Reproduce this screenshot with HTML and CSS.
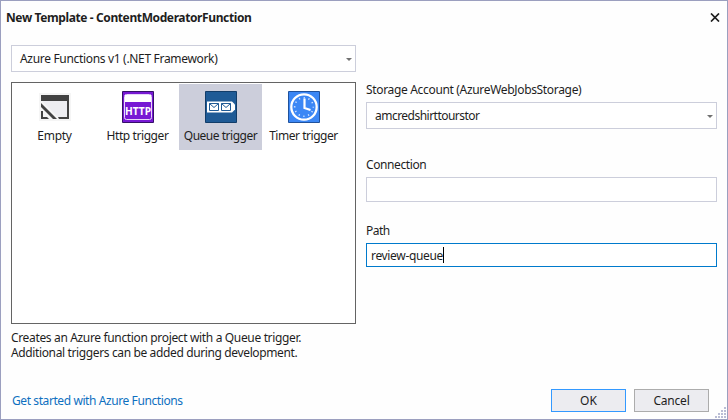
FILE: index.html
```html
<!DOCTYPE html>
<html lang="en">
<head>
<meta charset="utf-8">
<title>New Template - ContentModeratorFunction</title>
<link rel="stylesheet" href="styles.css">
</head>
<body>
<main class="dialog">
  <header class="titlebar">
    <h1 class="title"><span class="t-title">New Template - ContentModeratorFunction</span></h1>
    <svg class="close" width="10" height="9" viewBox="0 0 10 9"><path d="M1 .5 9 8.5M9 .5 1 8.5" fill="none" stroke="#1e1e1e" stroke-width="1.7"/></svg>
  </header>
  <div class="content">
    <section class="left">
      <div class="combo"><span class="t-framework">Azure Functions v1 (.NET Framework)</span><i class="arrow"></i></div>
      <div class="templates">
        <div class="item">
          <svg width="32" height="32" viewBox="0 0 32 32"><path fill="#f5f5f5" d="M0 2h32v28H0z"/><path fill="#ededf1" d="M4 10h24v16H19L4 11z"/><path fill="#424242" d="M2 4h28v24H20l-1-2h9V10H2zM2 20h2v6h4l2 2H2z"/><path fill="#424242" d="M2 12v4l12 12h4z"/></svg>
          <span class="t-empty">Empty</span>
        </div>
        <div class="item">
          <svg width="32" height="32" viewBox="0 0 32 32"><path fill="#7719d4" stroke="#351069" d="M.5.5h31v31H.5z"/><rect x="2.500" y="3.500" width="27" height="25" rx="2" fill="none" stroke="#e7d6f8"/><path fill="#fff" d="M3 4h26v7H3z"/><text class="http" x="3" y="23.500" textLength="26" lengthAdjust="spacingAndGlyphs">HTTP</text></svg>
          <span class="t-http">Http trigger</span>
        </div>
        <div class="item selected">
          <svg width="32" height="32" viewBox="0 0 32 32"><path fill="#1f5b96" stroke="#123d69" d="M.5.5h31v31H.5z"/><path fill="#fff" d="M2 10.500h25l3 3v5l-3 3H2z"/><path fill="#fff" stroke="#1f5b96" d="M4.500 12.500h9v7h-9zM16.500 12.500h9v7h-9zM4.500 12.500l4.500 4 4.500-4M16.500 12.500l4.500 4 4.500-4"/></svg>
          <span class="t-queue">Queue trigger</span>
        </div>
        <div class="item">
          <svg width="32" height="32" viewBox="0 0 32 32"><path fill="#3b87f5" stroke="#20529c" d="M.5.5h31v31H.5z"/><circle cx="16" cy="16" r="12.700" fill="none" stroke="#fff" stroke-width="2.300"/><circle cx="16" cy="16" r="9.300" fill="none" stroke="#cfe1ff" stroke-width="1.600" stroke-dasharray="1.300 3.570" stroke-dashoffset=".65"/><path d="M16.500 7.500V17l6 2" fill="none" stroke="#fff" stroke-width="2.200"/></svg>
          <span class="t-timer">Timer trigger</span>
        </div>
      </div>
      <p class="description"><span class="t-desc1">Creates an Azure function project with a Queue trigger.</span><br><span class="t-desc2">Additional triggers can be added during development.</span></p>
    </section>
    <section class="right">
      <label class="label"><span class="t-storage">Storage Account (AzureWebJobsStorage)</span></label>
      <div class="combo"><span class="t-account">amcredshirttourstor</span><i class="arrow"></i></div>
      <label class="label connection"><span class="t-conn">Connection</span></label>
      <div class="input"></div>
      <label class="label path"><span class="t-path">Path</span></label>
      <div class="input focused"><span class="t-review">review-queue</span><i class="caret"></i></div>
    </section>
  </div>
  <footer class="footer">
    <a class="link"><span class="t-link">Get started with Azure Functions</span></a>
    <div class="button primary"><span class="t-ok">OK</span></div>
    <div class="button"><span class="t-cancel">Cancel</span></div>
  </footer>
  <svg class="grip" width="11" height="11" viewBox="0 0 11 11"><path fill="#babdd5" d="M9 0h2v2H9zM6 3h2v2H6zM9 3h2v2H9zM3 6h2v2H3zM6 6h2v2H6zM9 6h2v2H9zM0 9h2v2H0zM3 9h2v2H3zM6 9h2v2H6zM9 9h2v2H9z"/></svg>
</main>
</body>
</html>
```
FILE: styles.css
```css
* { box-sizing: border-box; }
body { margin: 0; }
.dialog {
  position: relative;
  width: 728px;
  height: 420px;
  display: flex;
  flex-direction: column;
  border: 1px solid #9b9fbf;
  background: #fefefe;
  color: #1e1e1e;
  font: 12px/15px "Noto Sans", "Open Sans", sans-serif;
  white-space: nowrap;
}
.titlebar {
  height: 44px;
  flex: none;
  display: flex;
  justify-content: space-between;
  align-items: flex-start;
  padding: 9px 7px 0 5px;
}
.title { margin: 0; font-size: 12px; line-height: 15px; font-weight: 700; }
.close { margin-top: 3px; }
.content { display: flex; gap: 10px; padding: 0 10px; height: 340px; }
.left { width: 345px; }
.right { width: 351px; padding-top: 37px; }
.combo {
  height: 27px;
  display: flex;
  align-items: center;
  justify-content: space-between;
  border: 1px solid #cccedb;
  padding: 0 3px 0 8px;
  background: #fff;
}
.arrow { border: 3px solid transparent; border-top-color: #717171; border-bottom: 0; margin-top: 2px; }
.templates {
  display: flex;
  align-items: flex-start;
  margin-top: 10px;
  height: 242px;
  border: 1px solid #646464;
  padding: 1px;
  background: #fff;
}
.item {
  width: 83px;
  height: 66px;
  padding-top: 7px;
  display: flex;
  flex-direction: column;
  align-items: center;
  gap: 5px;
}
.item svg { display: block; flex: none; }
.selected { background: #cccedb; }
.http { font: 700 11px "Noto Sans", sans-serif; fill: #fff; }
.description { margin: 6px 0 0; }
.label { display: block; height: 20px; }
.connection { margin-top: 28px; }
.path { margin-top: 21px; }
.input {
  height: 25px;
  display: flex;
  align-items: center;
  border: 1px solid #cccedb;
  padding-left: 4px;
  background: #fff;
}
.focused { height: 24px; border-color: #007acc; }
.caret { width: 1px; height: 16px; background: #000; }
.footer { display: flex; padding: 4px 18px 0 11px; gap: 8px; }
.link { flex: 1; padding-top: 4px; color: #0e70c0; }
.button {
  width: 75px;
  height: 23px;
  display: flex;
  align-items: center;
  justify-content: center;
  border: 1px solid #acacac;
  background: #ececf0;
}
.primary { border-color: #3399ff; }
.grip { position: absolute; right: 1px; bottom: 1px; }

.t-title { letter-spacing: -.39px; }
.t-framework { letter-spacing: -.32px; }
.t-empty { letter-spacing: -.25px; }
.t-http { letter-spacing: -.42px; }
.t-queue { letter-spacing: -.48px; }
.t-timer { letter-spacing: -.46px; }
.t-desc1 { letter-spacing: -.345px; }
.t-desc2 { letter-spacing: -.37px; }
.t-storage { letter-spacing: -.33px; }
.t-account { letter-spacing: -.52px; }
.t-conn { letter-spacing: -.4px; }
.t-path { letter-spacing: -.5px; }
.t-review { letter-spacing: -.33px; }
.t-link { letter-spacing: -.41px; }
.t-cancel { letter-spacing: -.2px; }
```
